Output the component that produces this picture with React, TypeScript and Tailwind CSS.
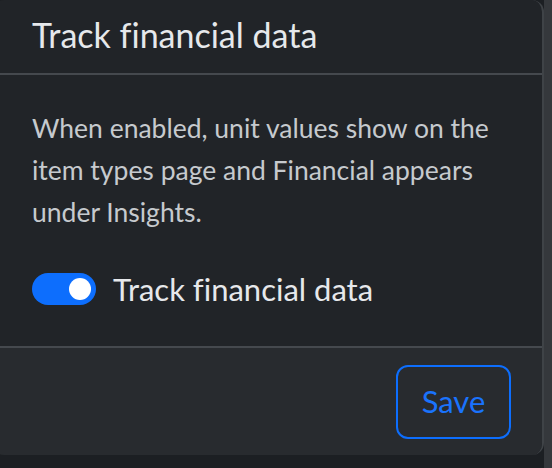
import React, { useState } from 'react'

const App = () => {
  const [track, setTrack] = useState(true)

  return (
    <div className="w-[552px] h-[468px] bg-[#1c1f23] flex overflow-hidden font-['Lato',sans-serif] [font-variant-ligatures:none]">
      <div className="w-[560px] h-[455px] -ml-[8px] flex shrink-0">
        <div className="flex-1 h-full flex flex-col bg-[#212428] border-r-2 border-[#3f4347] rounded-[12px] overflow-hidden">
          <div className="h-[75px] shrink-0 flex items-center pl-[40px] pb-[4px] border-b-2 border-[#45494e]">
            <h5 className="text-[34px] text-[#e6e8eb] leading-none">Track financial data</h5>
          </div>

          <div className="flex-1 pl-[40px] pr-[40px] pt-[32px]">
            <p className="text-[26.5px] leading-[42px] text-[#c6cace]">
              When enabled, unit values show on the item types page and Financial appears under Insights.
            </p>
            <label className="flex items-center gap-[17px] mt-[35px] cursor-pointer">
              <button
                type="button"
                onClick={() => setTrack(!track)}
                className={`w-[64px] h-[32px] rounded-full flex items-center px-[5px] ${
                  track ? 'bg-[#0d6efd] justify-end' : 'bg-[#3a3d41] justify-start'
                }`}
              >
                <span className="w-[22px] h-[22px] rounded-full bg-white" />
              </button>
              <span className="text-[31px] leading-[42px] text-[#e6e8eb]">Track financial data</span>
            </label>
          </div>

          <div className="h-[109px] shrink-0 bg-[#282b2f] border-t-2 border-[#45494e] flex items-center justify-end pr-[31px]">
            <button
              type="button"
              className="w-[115px] h-[74px] rounded-[12px] border-2 border-[#0d6efd] text-[#1a73fd] text-[31px]"
            >
              Save
            </button>
          </div>
        </div>
        <div className="w-[8px] h-[468px] bg-[#35383c] shrink-0" />
      </div>
    </div>
  )
}

export default App
